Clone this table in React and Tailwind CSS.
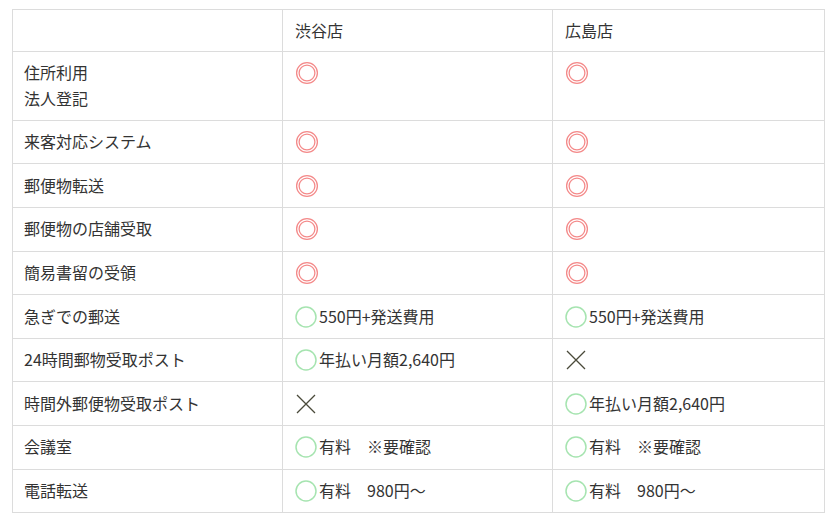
import React from "react";

const Double = () => (
  <svg width="24" height="24" viewBox="0 0 24 24" className="inline-block align-[-6px]">
    <circle cx="12" cy="12" r="10.4" fill="none" stroke="#f48a8a" strokeWidth="1.3" />
    <circle cx="12" cy="12" r="7.9" fill="none" stroke="#f48a8a" strokeWidth="1.3" />
  </svg>
);

const Circle = () => (
  <svg width="22" height="22" viewBox="0 0 22 22" className="inline-block align-[-5px] mr-[2px]">
    <circle cx="11" cy="11" r="10" fill="none" stroke="#a6e4b0" strokeWidth="1.5" />
  </svg>
);

const Cross = () => (
  <svg width="22" height="22" viewBox="0 0 22 22" className="inline-block align-[-5px]">
    <path d="M2 2 L20 20 M20 2 L2 20" stroke="#4a4a3a" strokeWidth="1.3" fill="none" />
  </svg>
);

const cell = (v) => {
  if (v === "double") return <Double />;
  if (v === "x") return <Cross />;
  return (
    <>
      <Circle />
      {v}
    </>
  );
};

const rows = [
  { label: ["住所利用", "法人登記"], a: "double", b: "double" },
  { label: ["来客対応システム"], a: "double", b: "double" },
  { label: ["郵便物転送"], a: "double", b: "double" },
  { label: ["郵便物の店舗受取"], a: "double", b: "double" },
  { label: ["簡易書留の受領"], a: "double", b: "double" },
  { label: ["急ぎでの郵送"], a: "550円+発送費用", b: "550円+発送費用" },
  { label: ["24時間郵物受取ポスト"], a: "年払い月額2,640円", b: "x" },
  { label: ["時間外郵便物受取ポスト"], a: "x", b: "年払い月額2,640円" },
  { label: ["会議室"], a: "有料　※要確認", b: "有料　※要確認" },
  { label: ["電話転送"], a: "有料　980円〜", b: "有料　980円〜" },
];

export default function App() {
  return (
    <div className="w-[828px] h-[518px] bg-white pt-[9px] pl-[12px] font-['Noto_Sans_CJK_JP','Noto_Sans',sans-serif] text-[16px] leading-[1.6] text-[#333]">
      <table className="w-[812px] border-collapse table-fixed">
        <colgroup>
          <col className="w-[270px]" />
          <col className="w-[270px]" />
          <col className="w-[272px]" />
        </colgroup>
        <thead>
          <tr>
            <th className="border border-[#dcdcdc] px-[11px] py-[7.5px] font-normal text-left"></th>
            <th className="border border-[#dcdcdc] px-[12px] py-[7.5px] font-normal text-left">渋谷店</th>
            <th className="border border-[#dcdcdc] px-[12px] py-[7.5px] font-normal text-left">広島店</th>
          </tr>
        </thead>
        <tbody>
          {rows.map((r, i) => (
            <tr key={i}>
              <td className="border border-[#dcdcdc] px-[11px] py-[8.5px] align-top">
                {r.label.map((l) => (
                  <div key={l}>{l}</div>
                ))}
              </td>
              <td className="border border-[#dcdcdc] px-[12px] py-[8.5px] align-top whitespace-pre">{cell(r.a)}</td>
              <td className="border border-[#dcdcdc] px-[12px] py-[8.5px] align-top whitespace-pre">{cell(r.b)}</td>
            </tr>
          ))}
        </tbody>
      </table>
    </div>
  );
}
